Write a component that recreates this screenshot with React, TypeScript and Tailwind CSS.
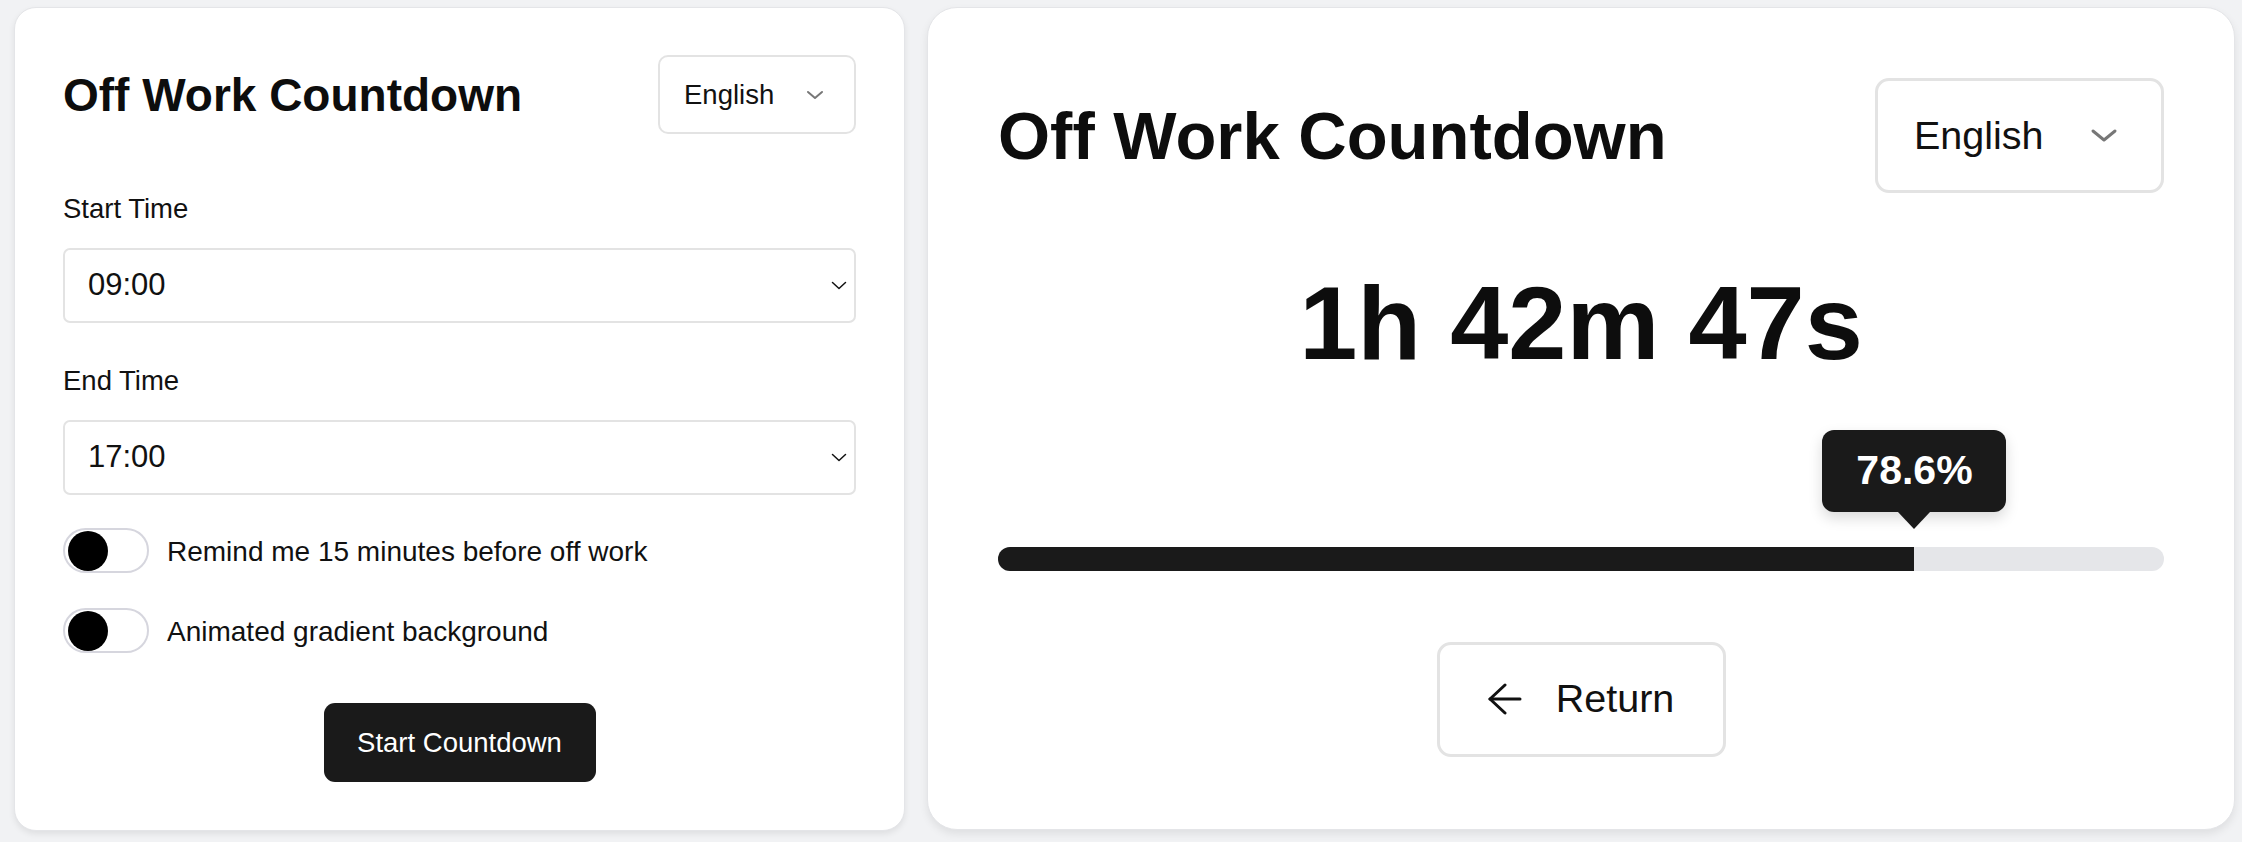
import React from 'react';

const font = { fontFamily: '"Liberation Sans", Arial, sans-serif' };

function Chevron({ w, h, color, stroke }: { w: number; h: number; color: string; stroke: number }) {
  return (
    <svg width={w} height={h} viewBox={`0 0 ${w} ${h}`} fill="none">
      <polyline
        points={`${stroke},${stroke} ${w / 2},${h - stroke} ${w - stroke},${stroke}`}
        stroke={color}
        strokeWidth={stroke}
        strokeLinecap="round"
        strokeLinejoin="round"
      />
    </svg>
  );
}

function TimeSelect({ value }: { value: string }) {
  return (
    <div className="flex h-[75px] items-center justify-between rounded-[7px] border-2 border-[#e3e3e3] bg-white pl-[23px] pr-[7px]">
      <span className="text-[31px] text-[#111]">{value}</span>
      <Chevron w={16} h={9} color="#111" stroke={1.5} />
    </div>
  );
}

function Toggle({ label }: { label: string }) {
  return (
    <div className="flex items-center gap-[18px]">
      <div className="flex h-[45px] w-[86px] items-center rounded-full border-2 border-[#d6d6de] bg-white px-[3px]">
        <div className="h-[40px] w-[40px] rounded-full bg-black" />
      </div>
      <span className="pt-[2px] text-[28px] text-[#111]">{label}</span>
    </div>
  );
}

function SetupCard() {
  return (
    <div className="flex h-[824px] w-[891px] shrink-0 flex-col rounded-[22px] border border-[#e4e5e8] bg-white px-[48px] pt-[47px] shadow-[0_3px_6px_rgba(0,0,0,0.08)]">
      <div className="flex items-center justify-between">
        <h1 className="text-[46px] font-bold leading-none text-[#0d0d0d]">Off Work Countdown</h1>
        <div className="flex h-[79px] w-[198px] items-center justify-between rounded-[10px] border-2 border-[#e3e3e3] pl-[24px] pr-[30px]">
          <span className="text-[27.5px] text-[#111]">English</span>
          <Chevron w={18} h={10} color="#777" stroke={2} />
        </div>
      </div>

      <label className="mt-[55px] text-[27.5px] leading-[40px] text-[#111]">Start Time</label>
      <div className="mt-[19px]">
        <TimeSelect value="09:00" />
      </div>

      <label className="mt-[38px] text-[27.5px] leading-[40px] text-[#111]">End Time</label>
      <div className="mt-[19px]">
        <TimeSelect value="17:00" />
      </div>

      <div className="mt-[33px] flex flex-col gap-[35px]">
        <Toggle label="Remind me 15 minutes before off work" />
        <Toggle label="Animated gradient background" />
      </div>

      <button className="mt-[50px] h-[79px] w-[272px] self-center rounded-[11px] bg-[#1a1a1a] text-[27.5px] text-white">
        Start Countdown
      </button>
    </div>
  );
}

function CountdownCard() {
  const progress = 78.6;
  return (
    <div className="flex h-[823px] w-[1308px] shrink-0 flex-col rounded-[30px] border border-[#e4e5e8] bg-white px-[70px] pt-[70px] shadow-[0_4px_8px_rgba(0,0,0,0.08)]">
      <div className="flex items-center justify-between">
        <h1 className="text-[67px] font-bold leading-none text-[#0d0d0d]">Off Work Countdown</h1>
        <div className="flex h-[115px] w-[289px] items-center justify-between rounded-[14px] border-[3px] border-[#e3e3e3] pl-[36px] pr-[43px]">
          <span className="text-[39.5px] text-[#111]">English</span>
          <Chevron w={28} h={15} color="#777" stroke={3} />
        </div>
      </div>

      <div className="mt-[78px] text-center text-[104.5px] font-bold leading-none text-[#0d0d0d]">
        1h 42m 47s
      </div>

      <div className="relative mt-[171px] h-[24px] rounded-full bg-[#e5e6e9]">
        <div className="h-full rounded-l-full bg-[#1a1a1a]" style={{ width: `${progress}%` }} />
        <div
          className="absolute bottom-full mb-[18px] flex -translate-x-1/2 flex-col items-center"
          style={{ left: `${progress}%` }}
        >
          <div className="flex h-[82px] w-[184px] items-center justify-center rounded-[12px] bg-[#1a1a1a] text-[41px] font-bold text-white shadow-[0_6px_14px_rgba(0,0,0,0.15)]">
            {progress}%
          </div>
          <div className="h-0 w-0 border-l-[16px] border-r-[16px] border-t-[17px] border-l-transparent border-r-transparent border-t-[#1a1a1a]" />
        </div>
      </div>

      <button className="mt-[71px] flex h-[115px] w-[289px] items-center justify-center gap-[34px] self-center rounded-[14px] border-[3px] border-[#e3e3e3] bg-white">
        <svg width="34" height="32" viewBox="0 0 34 32" fill="none">
          <polyline points="17,2 2,16 17,30" stroke="#111" strokeWidth="3" strokeLinecap="round" strokeLinejoin="round" />
          <line x1="2" y1="16" x2="32" y2="16" stroke="#111" strokeWidth="3" strokeLinecap="round" />
        </svg>
        <span className="text-[39.5px] text-[#111]">Return</span>
      </button>
    </div>
  );
}

export default function App() {
  return (
    <div className="flex h-[842px] w-[2242px] gap-[22px] overflow-hidden bg-[#f1f2f4] pl-[14px] pt-[7px]" style={font}>
      <SetupCard />
      <CountdownCard />
    </div>
  );
}
